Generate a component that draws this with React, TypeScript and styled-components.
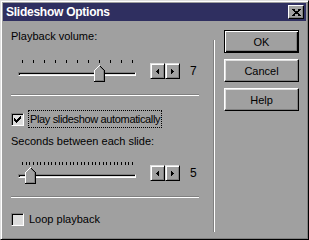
import React from "react";
import styled, { createGlobalStyle } from "styled-components";

const Global = createGlobalStyle`
  html, body { margin: 0; padding: 0; background: #a0a0a0; }
  body { font-family: "Liberation Sans", Arial, sans-serif; font-size: 11px; }
`;

const Window = styled.div`
  width: 309px;
  height: 240px;
  box-sizing: border-box;
  background: #a0a0a0;
  border: 1px solid;
  border-color: #dfdfdf #000 #000 #dfdfdf;
  box-shadow: inset 1px 1px #fff, inset -1px -1px #808080;
  padding: 2px;
  display: flex;
  flex-direction: column;
`;

const TitleBar = styled.div`
  height: 18px;
  background: #2f2f60;
  display: flex;
  align-items: center;
  justify-content: space-between;
  padding-left: 3px;
  padding-right: 2px;
`;

const Title = styled.span`
  color: #fff;
  font-weight: bold;
  font-size: 12px;
  letter-spacing: -0.25px;
  line-height: 14px;
`;

const CloseButton = styled.div`
  width: 16px;
  height: 14px;
  box-sizing: border-box;
  background: #a0a0a0;
  border: 1px solid;
  border-color: #fff #000 #000 #fff;
  box-shadow: inset -1px -1px #808080;
  display: flex;
  align-items: center;
  justify-content: center;
`;

const Body = styled.div`
  flex: 1;
  display: flex;
  padding-left: 8px;
`;

const LeftColumn = styled.div`
  width: 188px;
  padding-top: 9px;
  display: flex;
  flex-direction: column;
`;

const Label = styled.div<{ $mt?: number }>`
  height: 13px;
  line-height: 13px;
  margin-top: ${(p) => p.$mt ?? 0}px;
  color: #000;
  white-space: nowrap;
`;

const SliderRow = styled.div<{ $mt: number }>`
  display: flex;
  align-items: flex-start;
  margin-top: ${(p) => p.$mt}px;
  height: 22px;
`;

const SliderArea = styled.div`
  position: relative;
  width: 132px;
  height: 22px;
  display: flex;
  flex-direction: column;
`;

const Ticks = styled.svg`
  display: block;
  margin-left: 11px;
`;

const Track = styled.div`
  margin-left: 7px;
  margin-top: 9px;
  width: 118px;
  height: 4px;
  box-sizing: border-box;
  border: 1px solid;
  border-color: #808080 #fff #fff #808080;
  box-shadow: inset 1px 1px #000;
  background: #dfdfdf;
`;

const Thumb = styled.svg`
  position: absolute;
  top: 5px;
`;

const Spin = styled.div`
  display: flex;
  margin-left: 7px;
  margin-top: 3px;
`;

const SpinButton = styled.div`
  width: 15px;
  height: 16px;
  box-sizing: border-box;
  background: #a0a0a0;
  border: 1px solid;
  border-color: #dfdfdf #000 #000 #dfdfdf;
  box-shadow: inset 1px 1px #fff, inset -1px -1px #808080;
  display: flex;
  align-items: center;
  justify-content: center;
`;

const Value = styled.span`
  margin-left: 10px;
  margin-top: 3px;
  height: 16px;
  line-height: 16px;
  font-size: 12px;
`;

const HSep = styled.div<{ $mt: number }>`
  margin-top: ${(p) => p.$mt}px;
  width: 188px;
  height: 2px;
  box-sizing: border-box;
  border-top: 1px solid #808080;
  border-bottom: 1px solid #fff;
`;

const CheckRow = styled.div<{ $mt: number }>`
  display: flex;
  align-items: center;
  height: 18px;
  margin-top: ${(p) => p.$mt}px;
`;

const CheckBox = styled.div`
  width: 13px;
  height: 13px;
  box-sizing: border-box;
  border: 1px solid;
  border-color: #808080 #fff #fff #808080;
  box-shadow: inset 1px 1px #000, inset -1px -1px #dfdfdf;
  background: #dcdcdc;
  display: flex;
  align-items: center;
  justify-content: center;
`;

const CheckLabel = styled.span<{ $focus?: boolean }>`
  margin-left: ${(p) => (p.$focus ? 4 : 5)}px;
  height: 18px;
  box-sizing: border-box;
  padding: 0 ${(p) => (p.$focus ? 1 : 0)}px;
  border: ${(p) => (p.$focus ? "1px dotted #000" : "none")};
  line-height: ${(p) => (p.$focus ? 16 : 18)}px;
  letter-spacing: ${(p) => (p.$focus ? "-0.35px" : "0")};
  white-space: nowrap;
`;

const VSep = styled.div`
  margin-left: 14px;
  margin-top: 19px;
  width: 2px;
  height: 192px;
  box-sizing: border-box;
  border-left: 1px solid #808080;
  border-right: 1px solid #fff;
`;

const ButtonColumn = styled.div`
  margin-left: 9px;
  padding-top: 9px;
  display: flex;
  flex-direction: column;
  gap: 6px;
`;

const Button = styled.div<{ $default?: boolean }>`
  width: 75px;
  height: 23px;
  box-sizing: border-box;
  background: #a0a0a0;
  border: 1px solid;
  border-color: ${(p) => (p.$default ? "#000" : "#fff #000 #000 #fff")};
  box-shadow: ${(p) =>
    p.$default
      ? "inset 1px 1px #fff, inset -1px -1px #000, inset -2px -2px #808080"
      : "inset -1px -1px #808080, inset 1px 1px #dfdfdf"};
  display: flex;
  align-items: center;
  justify-content: center;
  font-size: 11px;
  color: #000;
`;

function TickMarks({ count }: { count: number }) {
  const w = 111;
  const xs = Array.from({ length: count }, (_, i) =>
    Math.round((i * (w - 1)) / (count - 1))
  );
  return (
    <Ticks width={w} height={3} shapeRendering="crispEdges">
      {xs.map((x, i) => (
        <rect key={i} x={x} y={0} width={1} height={3} fill="#000" />
      ))}
    </Ticks>
  );
}

function ThumbShape({ left }: { left: number }) {
  return (
    <Thumb
      width={11}
      height={17}
      style={{ left }}
      shapeRendering="crispEdges"
    >
      <path d="M0 5 L5 0 L10 5 L10 16 L0 16 Z" fill="#a0a0a0" />
      <rect x={0} y={5} width={1} height={11} fill="#fff" />
      <rect x={1} y={4} width={1} height={1} fill="#fff" />
      <rect x={2} y={3} width={1} height={1} fill="#fff" />
      <rect x={3} y={2} width={1} height={1} fill="#fff" />
      <rect x={4} y={1} width={1} height={1} fill="#fff" />
      <rect x={5} y={0} width={1} height={1} fill="#fff" />
      <rect x={6} y={1} width={1} height={1} fill="#000" />
      <rect x={7} y={2} width={1} height={1} fill="#000" />
      <rect x={8} y={3} width={1} height={1} fill="#000" />
      <rect x={9} y={4} width={1} height={1} fill="#000" />
      <rect x={10} y={5} width={1} height={12} fill="#000" />
      <rect x={0} y={16} width={11} height={1} fill="#000" />
      <rect x={9} y={5} width={1} height={11} fill="#808080" />
      <rect x={1} y={15} width={9} height={1} fill="#808080" />
      <rect x={6} y={2} width={1} height={1} fill="#808080" />
      <rect x={7} y={3} width={1} height={1} fill="#808080" />
      <rect x={8} y={4} width={1} height={1} fill="#808080" />
    </Thumb>
  );
}

function Arrow({ dir }: { dir: "left" | "right" }) {
  return (
    <svg width={3} height={5} shapeRendering="crispEdges">
      {dir === "left" ? (
        <path d="M3 0 L3 5 L0 2.5 Z" fill="#000" />
      ) : (
        <path d="M0 0 L0 5 L3 2.5 Z" fill="#000" />
      )}
    </svg>
  );
}

function Slider({
  mt,
  ticks,
  thumbLeft,
  value,
}: {
  mt: number;
  ticks: number;
  thumbLeft: number;
  value: string;
}) {
  return (
    <SliderRow $mt={mt}>
      <SliderArea>
        <TickMarks count={ticks} />
        <Track />
        <ThumbShape left={thumbLeft} />
      </SliderArea>
      <Spin>
        <SpinButton>
          <Arrow dir="left" />
        </SpinButton>
        <SpinButton>
          <Arrow dir="right" />
        </SpinButton>
      </Spin>
      <Value>{value}</Value>
    </SliderRow>
  );
}

export default function App() {
  return (
    <>
      <Global />
      <Window>
        <TitleBar>
          <Title>Slideshow Options</Title>
          <CloseButton>
            <svg width={9} height={7} shapeRendering="crispEdges">
              <path
                d="M0 0h3v1h-3z M6 0h3v1h-3z M1 1h2v1h-2z M6 1h2v1h-2z M2 2h5v1h-5z M3 3h3v1h-3z M2 4h5v1h-5z M1 5h2v1h-2z M6 5h2v1h-2z M0 6h3v1h-3z M6 6h3v1h-3z"
                fill="#000"
              />
            </svg>
          </CloseButton>
        </TitleBar>
        <Body>
          <LeftColumn>
            <Label>Playback volume:</Label>
            <Slider mt={17} ticks={11} thumbLeft={83} value="7" />
            <HSep $mt={12} />
            <CheckRow $mt={14}>
              <CheckBox>
                <svg width={7} height={7} shapeRendering="crispEdges">
                  <path
                    d="M6 0h1v3h-1z M5 1h1v3h-1z M4 2h1v3h-1z M3 3h1v3h-1z M2 4h1v3h-1z M1 3h1v3h-1z M0 2h1v3h-1z"
                    fill="#000"
                  />
                </svg>
              </CheckBox>
              <CheckLabel $focus>Play slideshow automatically</CheckLabel>
            </CheckRow>
            <Label $mt={7}>Seconds between each slide:</Label>
            <Slider mt={14} ticks={31} thumbLeft={14} value="5" />
            <HSep $mt={12} />
            <CheckRow $mt={12}>
              <CheckBox />
              <CheckLabel>Loop playback</CheckLabel>
            </CheckRow>
          </LeftColumn>
          <VSep />
          <ButtonColumn>
            <Button $default>OK</Button>
            <Button>Cancel</Button>
            <Button>Help</Button>
          </ButtonColumn>
        </Body>
      </Window>
    </>
  );
}
